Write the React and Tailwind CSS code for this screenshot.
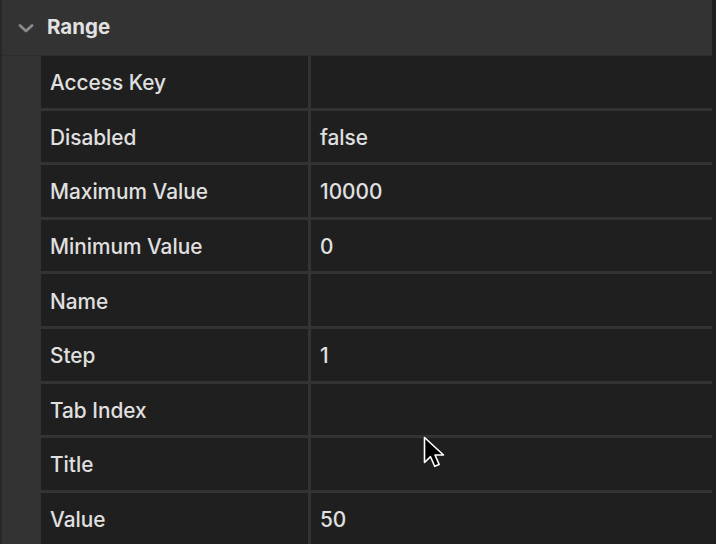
import React from "react";

const ROWS = [
  { label: "Access Key", value: "" },
  { label: "Disabled", value: "false" },
  { label: "Maximum Value", value: "10000" },
  { label: "Minimum Value", value: "0" },
  { label: "Name", value: "" },
  { label: "Step", value: "1" },
  { label: "Tab Index", value: "" },
  { label: "Title", value: "" },
  { label: "Value", value: "50" },
];

const Chevron = () => (
  <svg width="16" height="9" viewBox="0 0 16 9" fill="none">
    <path d="M2 1.5 8 7l6-5.5" stroke="#8a8a8a" strokeWidth="2.8" strokeLinecap="round" strokeLinejoin="round" />
  </svg>
);

const Cursor = () => (
  <svg width="24" height="34" viewBox="0 0 24 34">
    <path
      d="M1.5 1.5v25l6-5.8 4.2 9.6 4.4-1.9-4.1-9.4h8.5z"
      fill="#000"
      stroke="#fff"
      strokeWidth="1.6"
      strokeLinejoin="round"
    />
  </svg>
);

export default function App() {
  return (
    <div
      className="relative w-full h-[544px] overflow-hidden bg-[#1e1e1e] flex"
      style={{ fontFamily: "Inter, 'Liberation Sans', sans-serif" }}
    >
      {/* ───────── PANEL ───────── */}
      <div className="w-[712px] h-full bg-[#333333] border-l-2 border-[#272727] flex flex-col">
        {/* header */}
        <div className="h-[56px] shrink-0 flex items-center border-b border-[#2c2c2c]">
          <div className="w-[16px] ml-[16px] mt-[1px] flex items-center">
            <Chevron />
          </div>
          <span className="ml-[13px] text-[20.5px] font-bold text-[#e2e2e2]">
            Range
          </span>
        </div>

        {/* property grid */}
        <div className="pl-[39px] flex-1">
          <div className="grid grid-cols-[267px_1fr] gap-[3px]">
            {ROWS.map(row => (
              <React.Fragment key={row.label}>
                <div className="h-[51.6px] bg-[#1f1f1f] flex items-center pl-[9px] pt-[2px] text-[20.8px] font-medium text-[#e0e0e0]">
                  {row.label}
                </div>
                <div className="h-[51.6px] bg-[#1f1f1f] flex items-center pl-[9px] pt-[2px] text-[20.8px] font-medium text-[#e0e0e0]">
                  {row.value}
                </div>
              </React.Fragment>
            ))}
          </div>
        </div>
      </div>

      {/* mouse pointer */}
      <div className="absolute left-[423px] top-[436px] pointer-events-none">
        <Cursor />
      </div>
    </div>
  );
}
